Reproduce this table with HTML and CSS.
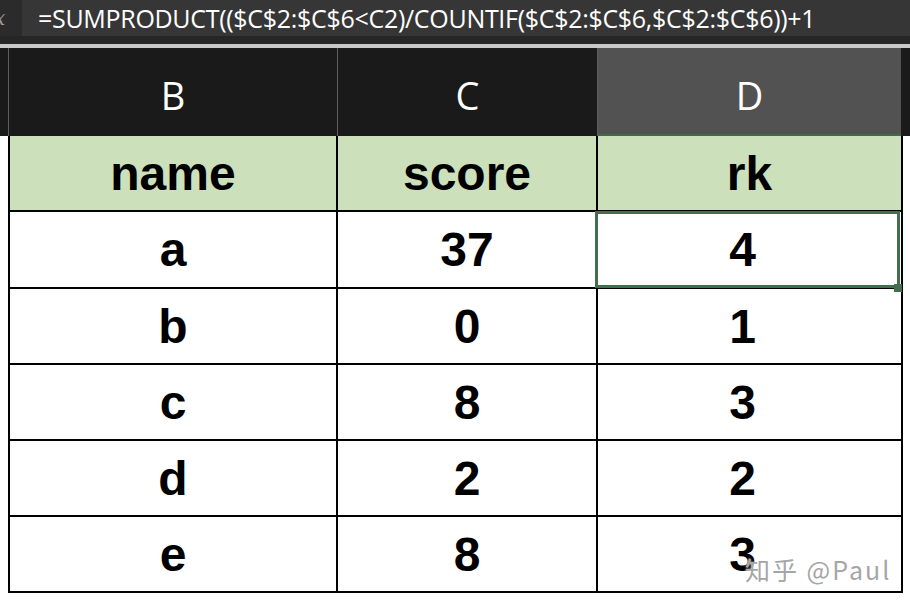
FILE: index.html
```html
<!DOCTYPE html>
<html>
<head>
<meta charset="utf-8">
<link rel="stylesheet" href="styles.css">
</head>
<body>
<div class="formula-bar">
  <span class="fx">x</span>
  <div class="formula">=SUMPRODUCT(($C$2:$C$6&lt;C2)/COUNTIF($C$2:$C$6,$C$2:$C$6))+1</div>
</div>
<div class="divider"></div>
<div class="col-heads">
  <div class="corner"></div>
  <div class="ch ch-b">B</div>
  <div class="ch ch-c">C</div>
  <div class="ch ch-d active">D</div>
  <div class="ch-rest"></div>
</div>
<div class="sheet">
  <div class="cell head">name</div><div class="cell head">score</div><div class="cell head">rk</div>
  <div class="cell">a</div><div class="cell">37</div><div class="cell num-d selected">4</div>
  <div class="cell">b</div><div class="cell">0</div><div class="cell num-d">1</div>
  <div class="cell">c</div><div class="cell">8</div><div class="cell num-d">3</div>
  <div class="cell">d</div><div class="cell">2</div><div class="cell num-d">2</div>
  <div class="cell">e</div><div class="cell">8</div><div class="cell num-d">3</div>
</div>
<div class="watermark">知乎 @Paul</div>
</body>
</html>
```

FILE: styles.css
```css
html, body {
  margin: 0;
  padding: 0;
  background: #ffffff;
  width: 910px;
  height: 606px;
  overflow: hidden;
  position: relative;
}

.formula-bar {
  height: 44px;
  background: #262626;
  display: flex;
  align-items: flex-start;
}

.fx {
  width: 22px;
  height: 36px;
  display: flex;
  align-items: center;
  font-family: "DejaVu Serif", serif;
  font-style: italic;
  font-size: 20px;
  color: #9a9a9a;
  text-indent: -6px;
  overflow: hidden;
  background: #2b2b2b;
}

.formula {
  flex: 1;
  height: 36px;
  background: #363636;
  color: #ffffff;
  font-family: "Open Sans", sans-serif;
  font-size: 25px;
  letter-spacing: -0.3px;
  line-height: 37px;
  padding-left: 16px;
  white-space: nowrap;
  overflow: hidden;
}

.divider {
  height: 4px;
  background: #c9c9c9;
}

.col-heads {
  height: 88px;
  background: #1a1a1a;
  display: flex;
}

.corner {
  width: 8px;
}

.ch {
  box-sizing: border-box;
  border-left: 1px solid #5e5e5e;
  display: flex;
  align-items: center;
  justify-content: center;
  color: #ffffff;
  font-family: "Open Sans", sans-serif;
  font-size: 38px;
  padding-top: 6px;
}

.ch-b { width: 329px; }
.ch-c { width: 260px; }
.ch-d { width: 304px; }

.ch.active {
  background: #525252;
  border-bottom: 2px solid #3d6c4c;
  padding-top: 8px;
}

.ch-rest {
  flex: 1;
}

.sheet {
  margin-left: 8px;
  width: 895px;
  box-sizing: border-box;
  display: grid;
  grid-template-columns: 328px 260px 305px;
  grid-template-rows: 76px 77px 76px 76px 76px 76px;
  border-left: 2px solid #000;
}

.cell {
  box-sizing: border-box;
  border-right: 2px solid #000;
  border-bottom: 2px solid #000;
  display: flex;
  align-items: center;
  justify-content: center;
  font-family: "Liberation Sans", Arial, sans-serif;
  font-weight: bold;
  font-size: 48px;
  color: #000;
}

.cell.head {
  background: #cce0bc;
}

.cell.num-d {
  padding-right: 14px;
}

.cell.selected {
  position: relative;
}

.cell.selected::before {
  content: "";
  position: absolute;
  left: -3px;
  top: -1px;
  right: 1px;
  bottom: -1px;
  border: 3px solid #42704f;
}

.cell.selected::after {
  content: "";
  position: absolute;
  right: -1px;
  bottom: -5px;
  width: 8px;
  height: 8px;
  background: #42704f;
}

.watermark {
  position: absolute;
  left: 745px;
  top: 551px;
  font-family: "Noto Sans CJK SC", "Noto Sans", sans-serif;
  font-size: 25px;
  color: #a6a6a6;
  letter-spacing: 2px;
  text-shadow: 0 0 2px #ffffff;
  white-space: nowrap;
}
```
